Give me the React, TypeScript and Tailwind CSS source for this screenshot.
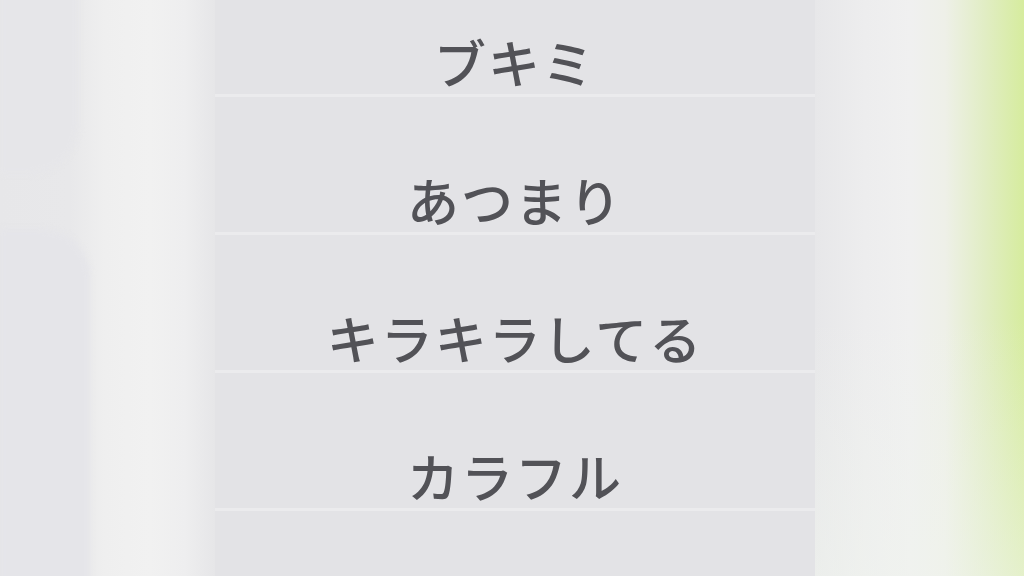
import React from "react";

const items = ["ブキミ", "あつまり", "キラキラしてる", "カラフル"];

export default function App() {
  return (
    <div
      className="relative flex h-[576px] w-[1024px] overflow-hidden bg-[linear-gradient(90deg,#e7e7e9_0px,#e8e8ea_70px,#efefef_105px,#f1f1f1_150px,#eeeeef_185px,#e6e6e8_215px)]"
      style={{ fontFamily: '"Noto Sans CJK JP", "Noto Sans", sans-serif' }}
    >
      {/* ぼやけた左のカード */}
      <div className="w-[215px] shrink-0 flex flex-col gap-[55px]">
        <div className="h-[190px] w-[78px] -mt-4 shrink-0 rounded-br-[48px] bg-[#e6e6e9] blur-[3px]" />
        <div className="flex-1 w-[90px] -mb-10 rounded-tr-[48px] bg-[#e5e5e9] blur-[3px]" />
      </div>

      <div className="flex w-[600px] shrink-0 flex-col -mt-[41px] bg-[#e3e3e6]">
        {items.map((label) => (
          <div
            key={label}
            className="flex h-[138px] shrink-0 items-center justify-center border-b-[3px] border-[#ebebed] pt-[70px]"
          >
            <span className="text-[52px] font-medium leading-none tracking-[2px] text-[#525257]">{label}</span>
          </div>
        ))}
      </div>

      <div className="flex-1 bg-[linear-gradient(90deg,#e7e7e9_0px,#ededee_50px,#f0f0f0_95px,#eef0e8_130px,#e1edc4_170px,#d6ec9e_209px)]">
        <div className="h-full w-full bg-[linear-gradient(180deg,rgba(255,255,255,0)_0%,rgba(255,255,255,0)_55%,rgba(240,244,238,0.55)_100%)]" />
      </div>
    </div>
  );
}
